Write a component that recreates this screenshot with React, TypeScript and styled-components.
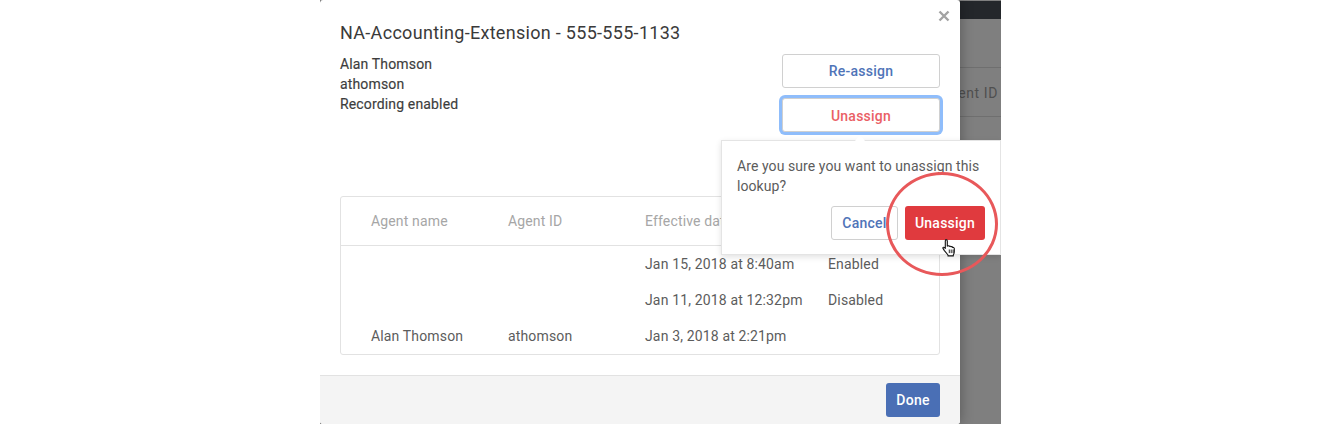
import React from "react";
import styled, { createGlobalStyle } from "styled-components";

const Global = createGlobalStyle`
  html, body { margin: 0; padding: 0; background: #fff; }
  body { font-family: Roboto, "Liberation Sans", sans-serif; -webkit-font-smoothing: antialiased; }
  * { box-sizing: border-box; }
`;

const Stage = styled.div`
  position: relative;
  width: 681px;
  height: 424px;
  margin-left: 320px;
  overflow: hidden;
  background: #7f7f7f;
`;

const BackTopBar = styled.div`
  height: 18px;
  margin-top: 1px;
  background: #24272b;
`;

const BackHeader = styled.div`
  display: flex;
  justify-content: flex-end;
  align-items: center;
  height: 50px;
  margin-top: 48px;
  padding: 1px 3px 0 0;
  border-top: 1px solid #6f6f6f;
  border-bottom: 1px solid #6f6f6f;
  color: #4f4f4f;
  font-size: 14px;
  letter-spacing: 0.6px;
`;

const Modal = styled.div`
  position: absolute;
  left: 0;
  top: 0;
  width: 640px;
  height: 424px;
  display: flex;
  flex-direction: column;
  background: #fff;
  border-radius: 3px;
  box-shadow: 0 0 14px rgba(0, 0, 0, 0.32);
`;

const CloseButton = styled.button`
  position: absolute;
  top: 10px;
  right: 10px;
  width: 12px;
  height: 12px;
  padding: 0;
  border: 0;
  background: none;
  color: #a3a3a3;
  display: flex;
`;

const Body = styled.div`
  flex: 1;
  display: flex;
  flex-direction: column;
  padding: 20px 20px 20px;
`;

const Title = styled.h2`
  margin: 0 0 8px;
  font-size: 18px;
  line-height: 26px;
  font-weight: 400;
  letter-spacing: 0.3px;
  color: #3a3a3a;
`;

const InfoRow = styled.div`
  display: flex;
  justify-content: space-between;
  align-items: flex-start;
`;

const InfoText = styled.div`
  font-size: 14px;
  line-height: 20px;
  color: #3d3d3d;
  letter-spacing: 0.15px;
  -webkit-text-stroke: 0.15px #3d3d3d;
`;

const ActionColumn = styled.div`
  display: flex;
  flex-direction: column;
  gap: 10px;
  width: 158px;
`;

const OutlineButton = styled.button<{ $tone: "blue" | "red"; $focused?: boolean }>`
  height: 34px;
  width: 100%;
  padding: ${(p) => (p.$focused ? "2px 0 0" : "0")};
  border: 1px solid #d0d0d0;
  border-radius: 3px;
  background: #fff;
  font-family: inherit;
  font-size: 14px;
  font-weight: 500;
  letter-spacing: 0.25px;
  color: ${(p) => (p.$tone === "blue" ? "#4f74b8" : "#ea5f66")};
  box-shadow: ${(p) => (p.$focused ? "0 0 0 3px #8fbdfb" : "none")};
`;

const TableCard = styled.div`
  margin-top: 64px;
  height: 159px;
  border: 1px solid #e2e2e2;
  border-radius: 3px;
`;

const Row = styled.div<{ $head?: boolean }>`
  display: grid;
  grid-template-columns: 137px 137px 183px 1fr;
  align-items: center;
  padding-left: 30px;
  height: ${(p) => (p.$head ? "49px" : "36px")};
  font-size: 14px;
  letter-spacing: 0.15px;
  color: ${(p) => (p.$head ? "#a6a6a6" : "#5c5c5c")};
  border-bottom: ${(p) => (p.$head ? "1px solid #e2e2e2" : "0")};
`;

const Footer = styled.div`
  height: 49px;
  display: flex;
  justify-content: flex-end;
  align-items: flex-start;
  padding: 7px 20px 0;
  background: #f4f4f4;
  border-top: 1px solid #e2e2e2;
  border-radius: 0 0 3px 3px;
`;

const SolidButton = styled.button<{ $tone: "blue" | "red"; $width: number }>`
  height: 34px;
  width: ${(p) => p.$width}px;
  padding: 0;
  border: 0;
  border-radius: 3px;
  background: ${(p) => (p.$tone === "blue" ? "#4a6fb5" : "#e03a3e")};
  color: #fff;
  font-family: inherit;
  font-size: 14px;
  font-weight: 500;
  letter-spacing: 0.25px;
`;

const Popover = styled.div`
  position: absolute;
  left: 401px;
  top: 140px;
  width: 280px;
  height: 115px;
  padding: 15px 15px 0;
  background: #fff;
  border: 1px solid #e4e4e4;
  box-shadow: 0 2px 6px rgba(0, 0, 0, 0.12);
  &::before {
    content: "";
    position: absolute;
    left: 133px;
    top: -6px;
    width: 0;
    height: 0;
    border-left: 5px solid transparent;
    border-right: 5px solid transparent;
    border-bottom: 6px solid #fff;
  }
`;

const PopoverText = styled.p`
  margin: 0;
  width: 250px;
  font-size: 14px;
  line-height: 20px;
  letter-spacing: 0.08px;
  color: #5c5c5c;
`;

const PopoverActions = styled.div`
  display: flex;
  gap: 7px;
  margin-top: 10px;
  margin-left: 94px;
`;

const CancelButton = styled(OutlineButton)`
  width: 67px;
  flex: none;
`;

const Highlight = styled.div`
  position: absolute;
  left: 566px;
  top: 172px;
  width: 112px;
  height: 104px;
  border: 3px solid #e8585a;
  border-radius: 50%;
  pointer-events: none;
`;

const Cursor = styled.svg`
  position: absolute;
  left: 622px;
  top: 238px;
  width: 16px;
  height: 19px;
`;

const rows = [
  ["", "", "Jan 15, 2018 at 8:40am", "Enabled"],
  ["", "", "Jan 11, 2018 at 12:32pm", "Disabled"],
  ["Alan Thomson", "athomson", "Jan 3, 2018 at 2:21pm", ""],
];

export default function App() {
  return (
    <>
      <Global />
      <Stage>
        <BackTopBar />
        <BackHeader>Agent ID</BackHeader>
        <Modal>
          <CloseButton aria-label="Close">
            <svg width="12" height="12" viewBox="0 0 12 12">
              <path d="M1.5 1.5l9 9M10.5 1.5l-9 9" stroke="currentColor" strokeWidth="2.4" />
            </svg>
          </CloseButton>
          <Body>
            <Title>NA-Accounting-Extension - 555-555-1133</Title>
            <InfoRow>
              <InfoText>
                Alan Thomson
                <br />
                athomson
                <br />
                Recording enabled
              </InfoText>
              <ActionColumn>
                <OutlineButton $tone="blue">Re-assign</OutlineButton>
                <OutlineButton $tone="red" $focused>
                  Unassign
                </OutlineButton>
              </ActionColumn>
            </InfoRow>
            <TableCard>
              <Row $head>
                <span>Agent name</span>
                <span>Agent ID</span>
                <span>Effective date</span>
                <span>Recording</span>
              </Row>
              {rows.map((r, i) => (
                <Row key={i}>
                  {r.map((c, j) => (
                    <span key={j}>{c}</span>
                  ))}
                </Row>
              ))}
            </TableCard>
          </Body>
          <Footer>
            <SolidButton $tone="blue" $width={54}>
              Done
            </SolidButton>
          </Footer>
        </Modal>
        <Popover>
          <PopoverText>Are you sure you want to unassign this lookup?</PopoverText>
          <PopoverActions>
            <CancelButton $tone="blue">Cancel</CancelButton>
            <SolidButton $tone="red" $width={80}>
              Unassign
            </SolidButton>
          </PopoverActions>
        </Popover>
        <Highlight />
        <Cursor viewBox="0 0 16 19">
          <path
            d="M4 1.6c.8 0 1.3.5 1.3 1.3v5.2l.5-.2c.7-.3 1.3 0 1.5.5.6-.4 1.4-.2 1.7.4.7-.3 1.4 0 1.7.6.8-.2 1.6.3 1.6 1.2v3.1c0 1.5-.5 2.4-1 3.3v.9H6v-.9L2.4 12.6 1 10.4c-.4-.7.4-1.5 1.2-1l1.1.9V2.9c0-.8.0-1.3.7-1.3z"
            fill="#fff"
            stroke="#111"
            strokeWidth="1.1"
            strokeLinejoin="round"
          />
          <path d="M7.3 11.5v3.6M9.2 11.5v3.6M11.1 11.5v3.6" stroke="#111" strokeWidth="0.9" />
        </Cursor>
      </Stage>
    </>
  );
}
